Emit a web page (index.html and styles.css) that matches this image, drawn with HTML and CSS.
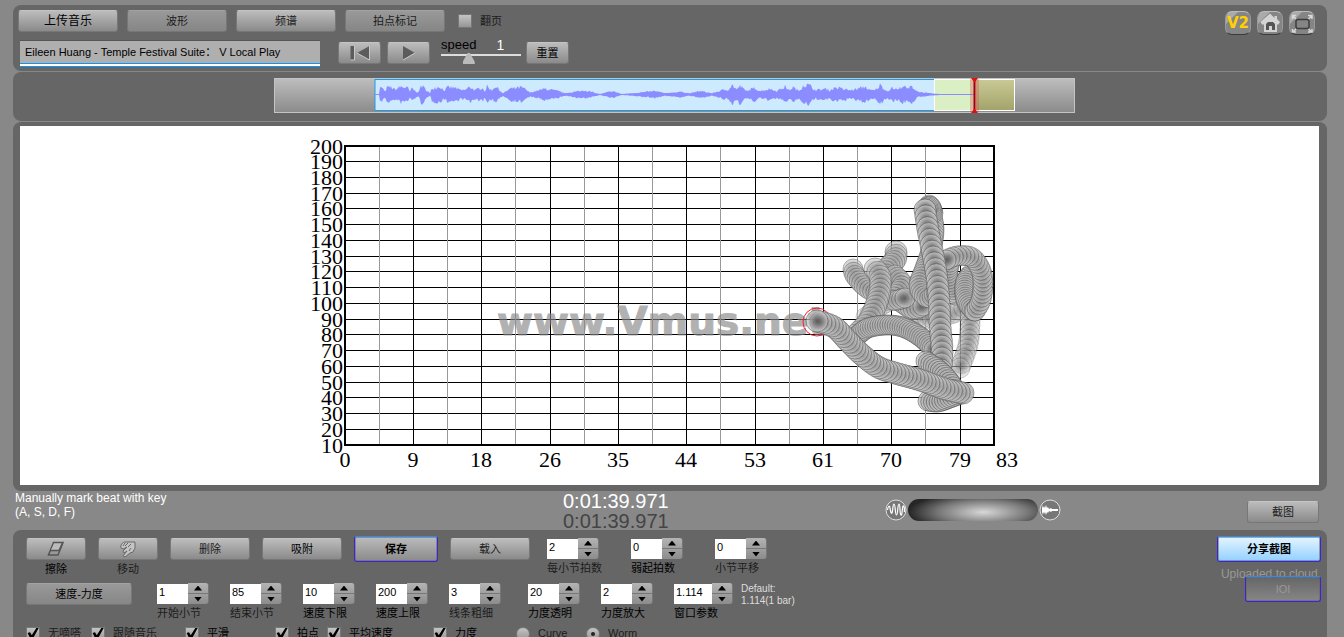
FILE: index.html
```html
<!DOCTYPE html>
<html lang="zh-CN">
<head>
<meta charset="utf-8">
<title>Vmus.net</title>
<link rel="stylesheet" href="styles.css">
</head>
<body>
<header class="panel topbar">
  <div class="topbar-main">
    <div class="row tabs">
      <button class="btn tab upload">上传音乐</button>
      <button class="btn tab pressed">波形</button>
      <button class="btn tab">频谱</button>
      <button class="btn tab pressed">拍点标记</button>
      <label class="check page-turn"><input type="checkbox"><span>翻页</span></label>
    </div>
    <div class="row transport">
      <input class="title-box" type="text" aria-label="Title" value="Eileen Huang - Temple Festival Suite： V Local Play">
      <button class="btn play" aria-label="Rewind"><svg width="22" height="16" viewBox="0 0 22 16"><path d="M1.500 1h4v14h-4zM20.500 1v14L8 8z" fill="#5c5c5c"/><path d="M5.500 1v14h-4M20.500 1v14L8 8" fill="none" stroke="#c8c8c8"/></svg></button>
      <button class="btn play next" aria-label="Play"><svg width="16" height="16" viewBox="0 0 16 16"><path d="M2 1l12 7-12 7z" fill="#5c5c5c"/><path d="M14 8L2 15" stroke="#ccc" fill="none"/></svg></button>
      <div class="speed">
        <div class="speed-head"><label for="speed">speed</label><output class="speed-value">1</output></div>
        <input id="speed" type="range" min="0" max="100" value="32">
      </div>
      <button class="btn reset">重置</button>
    </div>
  </div>
  <nav class="tools">
    <button class="tool v2">V2</button>
    <button class="tool" aria-label="Home"><svg width="24" height="24" viewBox="0 0 24 24"><path d="M12 1.500L2.500 10l1.500 2.500h2V20h13v-7.500h1.500L22 10l-3-3V4h-2.500v2z" fill="#d4d4d4"/><path d="M8 18v-6l2-2h5l2 2v6h-3v-4h-3v4z" fill="#555"/></svg></button>
    <button class="tool" aria-label="Full screen"><svg width="24" height="24" viewBox="0 0 24 24" fill="none"><rect x="6" y="7.500" width="13" height="9" rx="2" stroke="#3d3d3d" stroke-width="1.500"/><path d="M2.500 7V3.500H6M3 4l3 3M18 3.500h4V7M21.500 4l-3 3M2.500 17v3H6M3 20l3-3M18 20h4v-3M21.500 20l-3-3" stroke="#d8d8d8" stroke-width="1.500"/></svg></button>
  </nav>
</header>

<section class="panel overview">
  <svg id="wave" width="801" height="36" viewBox="274 77 801 36">
    <defs>
      <linearGradient id="gGray" x2="0" y2="1"><stop stop-color="#bdbdbd"/><stop offset="1" stop-color="#8b8b8b"/></linearGradient>
      <linearGradient id="gOlive" x2="0" y2="1"><stop stop-color="#c9c995"/><stop offset="1" stop-color="#a3a36b"/></linearGradient>
    </defs>
    <rect x="274.500" y="78.500" width="800" height="34" fill="url(#gGray)" stroke="#c4c4c4"/>
    <rect x="375" y="79.500" width="560" height="31" fill="#cdeaff" stroke="#1c9bea"/>
    <rect x="934.500" y="79.500" width="80" height="31" fill="#daf0c4" stroke="#fff"/>
    <rect x="976" y="80" width="38" height="30" fill="url(#gOlive)"/>
    <path id="wavePath" fill="#8a8cff"/>
    <rect x="970" y="79" width="9" height="33" fill="#e05050" opacity=".35"/>
    <path d="M974.500 78v34" stroke="#a00010" stroke-width="2"/>
    <path d="M971 78h7l-3 4h-1zM971 113h7l-3-4h-1z" fill="#e01010"/>
  </svg>
</section>

<main class="panel stage">
  <svg id="chart" viewBox="20 126 1299 359">
    <defs>
      <radialGradient id="bead"><stop stop-color="#484848"/><stop offset=".4" stop-color="#7c7c7c"/><stop offset=".75" stop-color="#b0b0b0"/><stop offset="1" stop-color="#d2d2d2"/></radialGradient>
    </defs>
    <g id="grid"></g>
    <text class="watermark" x="497" y="335">www.Vmus.net</text>
    <circle cx="817" cy="322" r="14" fill="none" stroke="#f02030"/>
    <g id="worm"></g>
  </svg>
</main>

<section class="status">
  <p class="hint">Manually mark beat with key<br>(A, S, D, F)</p>
  <div class="clock"><time>0:01:39.971</time><time class="total">0:01:39.971</time></div>
  <div class="mixer">
    <svg width="22" height="22" viewBox="0 0 22 22" fill="none"><circle cx="11" cy="11" r="10" fill="#777" stroke="#ddd"/><path d="M2.500 11c.5-4 2-5 2.500-2s1 6 2 5 .5-9 2-9 1 11 2.500 11 1-11 2.500-11 .5 10 2 11 1-10 2.500-9 .5 4 1 6" stroke="#fff" stroke-width="1.200"/></svg>
    <input class="pill" type="range" aria-label="Mix" value="60">
    <svg width="22" height="22" viewBox="0 0 22 22" fill="none"><circle cx="11" cy="11" r="10" fill="#777" stroke="#ddd"/><path d="M3 6l1 3 1-2 1 2 1-3 1 3 1-1 1 2 2-1 1 1h6v2h-6l-1 1-2-1-1 2-1-1-1 3-1-3-1 2-1-2-1 3z" fill="#fff"/></svg>
  </div>
  <button class="btn shot">截图</button>
</section>

<footer class="panel controls">
  <div class="control-rows">
    <div class="row first">
      <div class="stack center"><button class="btn w60" aria-labelledby="lErase"><svg width="18" height="16" viewBox="0 0 18 16"><path d="M6.500 1.500H16L11 14H1.500z" fill="#999" stroke="#555" stroke-width="1.500"/><path d="M7 2.500h8L12 9H4z" fill="#bbb"/><path d="M3.500 9.500H12L15.500 2" fill="none" stroke="#555" stroke-width="1.500"/></svg></button><span id="lErase" class="dark">擦除</span></div>
      <div class="stack center"><button class="btn w60" aria-labelledby="lMove"><svg width="18" height="18" viewBox="0 0 18 18"><path d="M2 8c-1-3 2-6 4-6h10v6l-2 4-3 1-5 4-2-1 4-5-3 2-1-2 4-4-4 2z" fill="#c4c4c4" stroke="#686868"/><path d="M6 3L4 6M9 3L6 6M12 4L9 7M12 8l-2 3" stroke="#686868"/></svg></button><span id="lMove">移动</span></div>
      <button class="btn w80">删除</button>
      <button class="btn w80 dark">吸附</button>
      <button class="btn save">保存</button>
      <button class="btn w80">载入</button>
      <div class="row steppers wide">
        <div class="stack"><div class="stepper"><input id="s1" type="text" value="2"><span class="spin"><button aria-label="Up"></button><button aria-label="Down"></button></span></div><label for="s1">每小节拍数</label></div>
        <div class="stack"><div class="stepper"><input id="s2" type="text" value="0"><span class="spin"><button aria-label="Up"></button><button aria-label="Down"></button></span></div><label class="dark" for="s2">弱起拍数</label></div>
        <div class="stack"><div class="stepper"><input id="s3" type="text" value="0"><span class="spin"><button aria-label="Up"></button><button aria-label="Down"></button></span></div><label for="s3">小节平移</label></div>
      </div>
    </div>
    <div class="row second">
      <button class="btn mode pressed dark">速度-力度</button>
      <div class="row steppers">
        <div class="stack"><div class="stepper"><input id="t1" type="text" value="1"><span class="spin"><button aria-label="Up"></button><button aria-label="Down"></button></span></div><label for="t1">开始小节</label></div>
        <div class="stack"><div class="stepper"><input id="t2" type="text" value="85"><span class="spin"><button aria-label="Up"></button><button aria-label="Down"></button></span></div><label for="t2">结束小节</label></div>
        <div class="stack"><div class="stepper"><input id="t3" type="text" value="10"><span class="spin"><button aria-label="Up"></button><button aria-label="Down"></button></span></div><label class="dark" for="t3">速度下限</label></div>
        <div class="stack"><div class="stepper"><input id="t4" type="text" value="200"><span class="spin"><button aria-label="Up"></button><button aria-label="Down"></button></span></div><label class="dark" for="t4">速度上限</label></div>
        <div class="stack"><div class="stepper"><input id="t5" type="text" value="3"><span class="spin"><button aria-label="Up"></button><button aria-label="Down"></button></span></div><label for="t5">线条粗细</label></div>
      </div>
      <div class="row steppers">
        <div class="stack"><div class="stepper"><input id="u1" type="text" value="20"><span class="spin"><button aria-label="Up"></button><button aria-label="Down"></button></span></div><label class="dark" for="u1">力度透明</label></div>
        <div class="stack"><div class="stepper"><input id="u2" type="text" value="2"><span class="spin"><button aria-label="Up"></button><button aria-label="Down"></button></span></div><label class="dark" for="u2">力度放大</label></div>
        <div class="stack long"><div class="stepper"><input id="u3" type="text" value="1.114"><span class="spin"><button aria-label="Up"></button><button aria-label="Down"></button></span></div><label class="dark" for="u3">窗口参数</label></div>
      </div>
      <p class="default">Default:<br>1.114(1 bar)</p>
    </div>
    <div class="options">
      <label class="check"><input type="checkbox" checked><span>无嘀嗒</span></label>
      <label class="check"><input type="checkbox" checked><span>跟随音乐</span></label>
      <label class="check dark"><input type="checkbox" checked><span>平滑</span></label>
      <label class="check dark"><input type="checkbox" checked><span>拍点</span></label>
      <label class="check dark"><input type="checkbox" checked><span>平均速度</span></label>
      <label class="check dark"><input type="checkbox" checked><span>力度</span></label>
      <label class="check"><input type="radio" name="view"><span>Curve</span></label>
      <label class="check"><input type="radio" name="view" checked><span>Worm</span></label>
    </div>
  </div>
  <div class="share">
    <button class="btn share-btn">分享截图</button>
    <span class="uploaded">Uploaded to cloud.</span>
    <button class="btn ioi" disabled>IOI</button>
  </div>
</footer>
<script src="app.js"></script>
</body>
</html>
```
FILE: styles.css
```css
* { box-sizing: border-box; }
body {
  margin: 0;
  padding: 5px 17px 0 13px;
  height: 100vh;
  overflow: hidden;
  background: #888;
  color: #1c1c1c;
  font: 11px/15px "Liberation Sans", "Noto Sans CJK SC", sans-serif;
}
p { margin: 0; }
button, input { font: inherit; color: inherit; margin: 0; }
.dark { color: #000; }
.row { display: flex; align-items: flex-start; }
.panel { background: #666; border-radius: 8px; margin-bottom: 1px; }

.btn {
  display: flex;
  align-items: center;
  justify-content: center;
  flex: none;
  height: 22px;
  padding: 0;
  border: 1px solid #777;
  border-top-color: #c4c4c4;
  border-radius: 3px;
  background: linear-gradient(#bcbcbc, #8a8a8a);
  white-space: nowrap;
}
.btn.pressed { background: linear-gradient(#999, #868686); border-top-color: #a2a2a2; }

.topbar { display: flex; justify-content: space-between; height: 66px; padding: 5px 12px 0 5px; }
.tabs { gap: 9px; }
.tab { width: 100px; }
.upload { font-size: 12px; color: #000; }
.check { display: flex; align-items: center; gap: 8px; white-space: nowrap; }
.check input {
  appearance: none;
  flex: none;
  display: grid;
  place-items: center;
  width: 14px;
  height: 14px;
  border: 1px solid #777;
  background: linear-gradient(#c4c4c4, #969696);
}
.check input[type="radio"] { border-radius: 50%; }
.check input[type="radio"]:checked::after { content: ""; width: 4px; height: 4px; border-radius: 50%; background: #222; }
.check input[type="checkbox"]:checked::after {
  content: "";
  width: 12px;
  height: 12px;
  background: #000;
  clip-path: polygon(5% 45%, 25% 40%, 40% 65%, 80% 0, 100% 0, 45% 100%, 32% 100%);
}
.page-turn { height: 22px; padding-left: 4px; }
.transport { margin-top: 8px; padding-left: 2px; }
.title-box {
  width: 300px;
  height: 27px;
  padding: 0 5px 6px;
  border: 0;
  border-top: 1px solid #555;
  background: linear-gradient(#0b95f5, #0b95f5) 0 100% / 100% 1px no-repeat,
    linear-gradient(#0b95f5 1px, #fff 1px) 0 100% / 100% 4px no-repeat, #afafaf;
  color: #000;
}
.play { width: 43px; margin: 2px 6px 0 18px; }
.play.next { margin: 2px 11px 0 0; }
.speed { display: flex; flex-direction: column; width: 80px; margin-right: 5px; }
.speed-head { display: flex; gap: 20px; font-size: 13px; color: #000; height: 12px; line-height: 10px; }
.speed-value { color: #fff; font-size: 14px; }
.speed input {
  appearance: none;
  width: 80px;
  height: 13px;
  background: linear-gradient(#ddd, #ddd) 0 2px / 100% 2px no-repeat;
}
.speed input::-webkit-slider-thumb {
  appearance: none;
  width: 12px;
  height: 11px;
  background: #bbb;
  clip-path: polygon(40% 0, 60% 0, 100% 80%, 100% 100%, 0 100%, 0 80%);
}
.reset { width: 43px; margin-top: 2px; color: #000; }
.tools { display: flex; gap: 6px; padding-top: 1px; }
.tool {
  display: grid;
  place-items: center;
  width: 26px;
  height: 24px;
  padding: 0;
  border: 1px solid #999;
  border-top-color: #bbb;
  border-bottom: 1px solid #3a3a3a;
  border-radius: 7px;
  background: linear-gradient(135deg, #aaa 25%, #858585 27%);
}
.v2 { color: #ffd100; font: bold 15px "DejaVu Sans", sans-serif; }

.overview { display: flex; justify-content: center; height: 49px; padding: 5px 0 0 9px; }
.stage { padding: 4px 8px 6px 7px; }
.stage svg { display: block; width: 100%; height: 359px; background: #fff; }
.tick { font: 22px "Liberation Serif", serif; fill: #000; }
.watermark { font: bold 39px "DejaVu Sans", sans-serif; fill: #888; stroke: #888; stroke-width: 1px; opacity: .65; }

.status { display: grid; grid-template-columns: 548px 322px 1fr auto; align-items: start; height: 39px; padding: 0 8px 0 2px; margin-top: -1px; }
.hint { font-size: 12px; line-height: 14px; color: #fff; }
.clock { display: flex; flex-direction: column; font-size: 20px; line-height: 20px; color: #fff; }
.total { color: #444; }
.mixer { display: flex; align-items: center; gap: 1px; padding-top: 8px; }
.pill {
  appearance: none;
  width: 130px;
  height: 22px;
  border-radius: 11px;
  background: radial-gradient(ellipse 75px 20px at 58% 60%, #d8d8d8, #777 60%, #262626);
}
.pill::-webkit-slider-thumb { appearance: none; width: 1px; height: 1px; }
.shot { width: 72px; margin-top: 10px; }

.controls { display: flex; justify-content: space-between; min-height: 130px; padding: 8px 6px 0 13px; }
.stack { display: flex; flex-direction: column; gap: 2px; height: 38px; white-space: nowrap; }
.center { align-items: center; }
.first { gap: 12px; }
.w60 { width: 60px; }
.w80 { width: 80px; }
.save, .share-btn, .ioi {
  border: 1px solid #3b22e0;
  border-top-color: #2e8cf0;
  box-shadow: inset 0 0 0 1px #6668;
  height: 26px;
}
.save, .share-btn { margin-top: -2px; color: #000; font-weight: bold; }
.save { width: 84px; }
.steppers { gap: 21px; }
.steppers.wide { gap: 32px; margin-left: 5px; }
.steppers .stack { width: 52px; }
.steppers .stack.long { width: 59px; }
.stepper { display: flex; height: 22px; }
.stepper input { flex: 1; min-width: 0; border: 0; padding: 0 2px 3px; background: #fff; color: #000; margin-top: 1px; }
.spin { display: flex; flex-direction: column; width: 21px; }
.spin button {
  display: grid;
  place-items: center;
  flex: 1;
  padding: 0;
  border: 0;
  border-right: 1px solid #777;
  background: linear-gradient(#b4b4b4, #a0a0a0);
  border-radius: 0 3px 0 0;
}
.spin button + button { border-top: 1px solid #777; background: linear-gradient(#a0a0a0, #8c8c8c); border-radius: 0 0 3px; }
.spin button::after { content: ""; width: 8px; height: 5px; background: #000; clip-path: polygon(50% 0, 100% 100%, 0 100%); }
.spin button + button::after { clip-path: polygon(0 0, 100% 0, 50% 100%); }
.second { margin-top: 7px; }
.mode { width: 106px; margin-right: 25px; }
.second .steppers + .steppers { margin-left: 27px; }
.default { margin-left: 8px; line-height: 12px; font-size: 10px; color: #ddd; }
.options { display: grid; grid-template-columns: 65px 94px 90px 52px 106px 83px 70px 80px; margin-top: 5px; }
.share { display: flex; flex-direction: column; align-items: flex-end; }
.share-btn { width: 104px; background: linear-gradient(#e4f5ff, #93d0ff); }
.uploaded { margin-top: 5px; color: #999; font-size: 12px; }
.ioi { width: 76px; margin-top: -6px; background: linear-gradient(#6668, #868686); color: #999; }
```
FILE: app.js
```js
const NS = 'http://www.w3.org/2000/svg';

function add(parent, name, attrs, text) {
  const el = document.createElementNS(NS, name);
  for (const key in attrs) el.setAttribute(key, attrs[key]);
  if (text !== undefined) el.textContent = text;
  parent.appendChild(el);
  return el;
}

/* Axes: tempo 10-200 upwards, loudness 0-83 to the right. */
function drawGrid() {
  const grid = document.getElementById('grid');
  const box = { left: 345, right: 994, top: 146, bottom: 445 };
  for (let i = 0; i < 20; i++) {
    const y = Math.floor(box.top + (box.bottom - box.top) * i / 19) + 0.5;
    add(grid, 'path', { d: `M${box.left} ${y}H${box.right}`, stroke: '#000' });
    add(grid, 'text', { class: 'tick', x: 343, y: y + 7.5, 'text-anchor': 'end' }, 200 - i * 10);
  }
  [0, 9, 18, 26, 35, 44, 53, 61, 70, 79].forEach((value, i) => {
    const x = Math.floor(box.left + 68.35 * i);
    if (i) add(grid, 'path', { d: `M${x + 0.5} ${box.top}V${box.bottom}`, stroke: '#000' });
    if (i < 9) add(grid, 'path', { d: `M${x + 34.5} ${box.top}V${box.bottom}`, stroke: '#999' });
    add(grid, 'text', { class: 'tick', x, y: 467, 'text-anchor': 'middle' }, value);
  });
  add(grid, 'text', { class: 'tick', x: 1007, y: 467, 'text-anchor': 'middle' }, 83);
  add(grid, 'rect', { x: 345, y: 146, width: 649, height: 299, fill: 'none', stroke: '#000', 'stroke-width': 2 });
}

/* Worm: smooth strokes of beads, the newest on top. */
const strokes = [
  { r: 10, step: 5, o: 0.35, p: [[866, 317], [895, 300], [923, 318], [957, 312], [970, 300]] },
  { r: 10, step: 5, o: 0.4, p: [[970, 310], [970, 325], [968, 345], [960, 368]] },
  { r: 10, step: 3.5, o: 0.6, p: [[853, 269], [856, 277], [870, 290], [893, 298], [913, 309], [923, 306]] },
  { r: 11, step: 3.5, o: 0.6, p: [[896, 252], [895, 260], [885, 272], [890, 280], [905, 288], [918, 287]] },
  { r: 10, step: 3.5, o: 0.6, p: [[895, 275], [902, 285], [892, 300], [905, 298]] },
  { r: 11, step: 4.5, o: 0.6, p: [[875, 269], [880, 277], [880, 290], [876, 305], [868, 322], [856, 335]] },
  { r: 10, step: 2.5, o: 0.65, p: [[856, 337], [868, 328], [888, 325], [905, 328], [922, 338], [934, 350]] },
  { r: 10, step: 3, o: 0.6, p: [[929, 205], [934, 228], [931, 250], [925, 268], [919, 287], [930, 298], [945, 280]] },
  { r: 10, step: 3, o: 0.6, p: [[955, 295], [948, 275], [950, 262]] },
  { r: 10, step: 2.5, o: 0.65, p: [[970, 275], [965, 284], [966, 300], [974, 311]] },
  { r: 10, step: 4, o: 0.65, p: [[975, 311], [981, 300], [983, 282], [980, 268], [971, 257], [957, 256], [946, 260]] },
  { r: 10, step: 1.6, o: 0.6, p: [[933, 213], [930, 206], [926, 209]] },
  { r: 11, step: 6, o: 0.75, p: [[925, 210], [928, 230], [932, 250], [936, 272], [939, 300], [940, 325], [942, 350], [941, 370]] },
  { r: 10, step: 3, o: 0.75, p: [[926, 361], [940, 371], [950, 382], [956, 392]] },
  { r: 10, step: 3, o: 0.75, p: [[928, 401], [938, 402], [950, 398], [963, 393]] },
  { r: 11, step: 4, o: 0.7, p: [[963, 393], [945, 389], [920, 380], [895, 373], [878, 367], [861, 354], [847, 340], [834, 327], [817, 321]] }
];

function drawWorm() {
  const worm = document.getElementById('worm');
  for (const s of strokes) {
    const pts = s.p;
    let d = `M${pts[0]}`;
    for (let i = 0; i < pts.length - 1; i++) {
      const [a, b, c, e] = [pts[i - 1] || pts[i], pts[i], pts[i + 1], pts[i + 2] || pts[i + 1]];
      d += `C${b[0] + (c[0] - a[0]) / 6} ${b[1] + (c[1] - a[1]) / 6} ${c[0] - (e[0] - b[0]) / 6} ${c[1] - (e[1] - b[1]) / 6} ${c}`;
    }
    const line = document.createElementNS(NS, 'path');
    line.setAttribute('d', d);
    const length = line.getTotalLength();
    const n = Math.ceil(length / s.step);
    for (let i = 0; i <= n; i++) {
      const pt = line.getPointAtLength(length * i / n);
      add(worm, 'circle', { cx: pt.x, cy: pt.y, r: s.r, fill: 'url(#bead)', stroke: '#444', 'stroke-width': 0.7, 'fill-opacity': s.o, 'stroke-opacity': s.o });
    }
  }
}

/* Waveform outline from loudness keyframes. */
const loud = [[375, 0], [379, 0], [380, 8], [382, 9], [385, 3], [387, 9], [391, 9], [395, 6], [401, 10], [408, 8], [410, 3], [412, 8], [416, 3], [419, 3], [421, 12], [430, 1], [432, 8], [440, 10], [444, 5], [448, 9],
  [456, 8], [461, 5], [466, 6], [470, 10], [475, 5], [482, 9], [485, 4], [487, 10], [492, 5], [495, 11], [503, 1], [510, 7], [522, 9], [530, 2], [545, 7], [558, 4], [565, 1], [585, 5], [600, 0], [612, 4], [622, 0], [640, 2],
  [655, 4], [665, 1], [680, 3], [690, 1], [700, 4], [712, 1], [722, 5], [728, 6], [732, 12], [737, 6], [740, 11], [746, 4], [755, 8], [760, 4], [770, 7], [777, 4], [785, 10], [789, 5], [793, 9], [799, 4], [803, 12], [809, 12], [816, 5],
  [825, 7], [830, 5], [835, 9], [850, 5], [858, 7], [865, 10], [870, 5], [875, 5], [880, 12], [887, 4], [892, 8], [899, 6], [902, 12], [907, 7], [912, 10], [918, 3], [930, 1], [940, 0], [975, 0]];

function drawWave() {
  let seed = 7;
  const rand = () => (seed = (seed * 16807) % 2147483647) / 2147483647;
  const upper = [];
  const lower = [];
  let k = 0;
  for (let x = 375; x < 975; x++) {
    while (loud[k + 1][0] < x) k++;
    const [x0, a0] = loud[k];
    const [x1, a1] = loud[k + 1];
    const amp = a0 + (a1 - a0) * (x - x0) / (x1 - x0);
    upper.push(`${x} ${94 - amp * (0.5 + 0.45 * rand())}`);
    lower.unshift(`${x} ${95 + amp * (0.5 + 0.45 * rand())}`);
  }
  document.getElementById('wavePath').setAttribute('d', `M${upper.concat(lower).join('L')}z`);
}

drawGrid();
drawWorm();
drawWave();
```
